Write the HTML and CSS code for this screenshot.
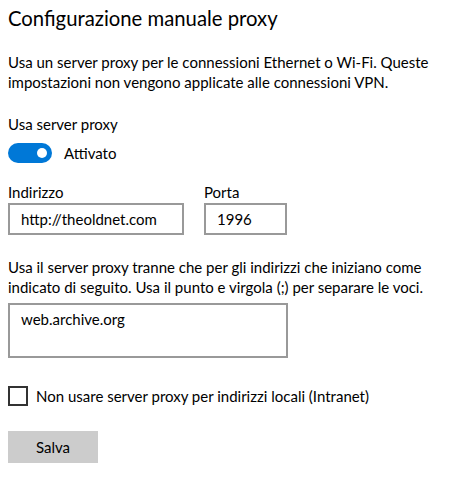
FILE: index.html
```html
<!DOCTYPE html>
<html lang="it">
<head>
    <meta charset="UTF-8">
    <meta name="viewport" content="width=device-width, initial-scale=1.0">
    <title>Proxy</title>
    <link rel="stylesheet" href="styles.css">
</head>
<body>
    <h1 class="titleClass">Configurazione manuale proxy</h1>
    <p class="descClass">Usa un server proxy per le connessioni Ethernet o Wi-Fi. Queste impostazioni non vengono applicate alle connessioni VPN.</p>

    <div class="captionClass">Usa server proxy</div>
    <div class="toggleRowClass">
        <div class="toggleClass"><div class="knobClass"></div></div>
        <div>Attivato</div>
    </div>

    <div class="fieldsRowClass">
        <div class="fieldClass">
            <div>Indirizzo</div>
            <div class="inputClass addressClass">http://theoldnet.com</div>
        </div>
        <div class="fieldClass">
            <div>Porta</div>
            <div class="inputClass portClass">1996</div>
        </div>
    </div>

    <p class="exceptClass">Usa il server proxy tranne che per gli indirizzi che iniziano come indicato di seguito. Usa il punto e virgola (;) per separare le voci.</p>
    <div class="inputClass areaClass">web.archive.org</div>

    <div class="checkRowClass">
        <div class="checkboxClass"></div>
        <div>Non usare server proxy per indirizzi locali (Intranet)</div>
    </div>

    <div class="buttonClass">Salva</div>
</body>
</html>
```

FILE: styles.css
```css
body{
    margin: 0;
    padding: 0 8px;
    font-family: "Lato", "Noto Sans", sans-serif;
    font-size: 15px;
    line-height: 20px;
    color: #000;
    background: #fff;
}
.titleClass{
    margin: 0;
    padding-top: 4px;
    font-size: 20.3px;
    font-weight: 400;
    line-height: 28px;
}
.descClass{
    margin: 20px 0 0 0;
    width: 450px;
}
.captionClass{
    margin-top: 22px;
}
.toggleRowClass{
    display: flex;
    align-items: center;
    gap: 12px;
    margin-top: 9px;
}
.toggleClass{
    width: 44px;
    height: 20px;
    border-radius: 10px;
    background: #0078d7;
    display: flex;
    align-items: center;
    justify-content: flex-end;
    padding-right: 5px;
    box-sizing: border-box;
}
.knobClass{
    width: 10px;
    height: 10px;
    border-radius: 50%;
    background: #fff;
}
.fieldsRowClass{
    display: flex;
    gap: 20px;
    margin-top: 19px;
}
.fieldClass{
    display: flex;
    flex-direction: column;
    gap: 1px;
}
.inputClass{
    border: 2px solid #999;
    box-sizing: border-box;
    padding: 4px 11px;
}
.addressClass{
    width: 176px;
    height: 32px;
}
.portClass{
    width: 83px;
    height: 32px;
}
.exceptClass{
    margin: 22px 0 0 0;
    width: 450px;
}
.areaClass{
    margin-top: 6px;
    width: 280px;
    height: 55px;
}
.checkRowClass{
    display: flex;
    align-items: center;
    gap: 8px;
    margin-top: 28px;
}
.checkboxClass{
    width: 20px;
    height: 20px;
    border: 2px solid #333;
    box-sizing: border-box;
}
.buttonClass{
    margin-top: 25px;
    width: 90px;
    height: 32px;
    background: #ccc;
    display: flex;
    align-items: center;
    justify-content: center;
}
```
